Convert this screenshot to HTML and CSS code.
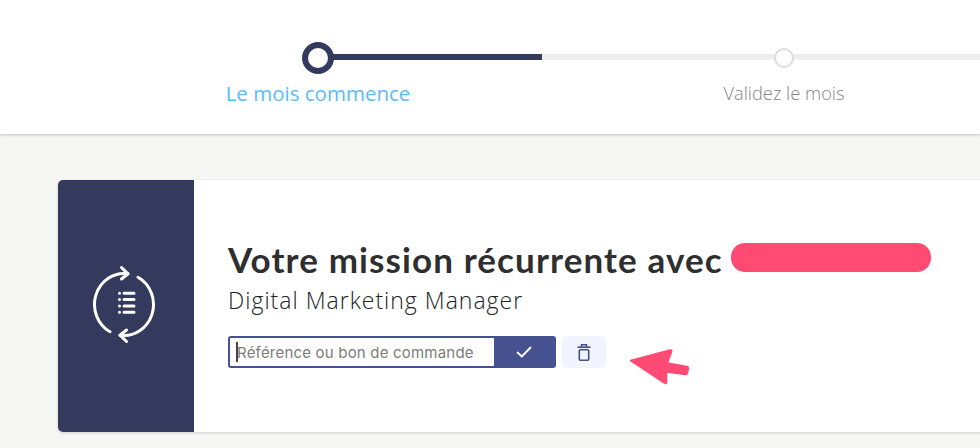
FILE: index.html
```html
<!DOCTYPE html>
<html lang="fr">
<head>
<meta charset="utf-8">
<title>Mission récurrente</title>
<link rel="stylesheet" href="styles.css">
</head>
<body>
<header class="header">
  <ol class="stepper">
    <li class="step step-active">
      <span class="dot"></span>
      <span class="label">Le mois commence</span>
    </li>
    <li class="step">
      <span class="dot"></span>
      <span class="label">Validez le mois</span>
    </li>
  </ol>
</header>
<main class="main">
  <section class="card">
    <aside class="side">
      <svg class="side-icon" width="64" height="84" viewBox="0 0 64 84" fill="none" stroke="#fff" stroke-width="3" stroke-linecap="round" stroke-linejoin="round">
        <path d="M36 10.800 A29.500 31 0 0 0 18 68.800"/>
        <path d="M29.500 4.500 L36 10.800 L29.500 16"/>
        <path d="M46 14.200 A29.500 31 0 0 1 28 72.200"/>
        <path d="M34.500 67 L28 72.200 L34.500 78.500"/>
        <path d="M27.500 30.300 V30.310 M27.500 36.500 V36.510 M27.500 43 V43.010 M27.500 49.300 V49.310"/>
        <path d="M32 30.300 H42 M32 36.500 H42 M32 43 H42 M32 49.300 H42"/>
      </svg>
    </aside>
    <div class="content">
      <div class="title-row">
        <h1 class="title">Votre mission récurrente avec</h1>
        <span class="redact"></span>
      </div>
      <p class="subtitle">Digital Marketing Manager</p>
      <div class="actions">
        <form class="ref-form">
          <div class="ref-field">
            <span class="caret"></span>
            <span class="placeholder">Référence ou bon de commande</span>
          </div>
          <button class="confirm" type="button" aria-label="Valider">
            <svg width="16" height="12" viewBox="0 0 16 12" fill="none" stroke="#fff" stroke-width="1.800" stroke-linecap="round" stroke-linejoin="round"><path d="M1.500 6.500 L5.800 10.500 L14.500 1.500"/></svg>
          </button>
        </form>
        <button class="trash" type="button" aria-label="Supprimer">
          <svg width="14" height="17" viewBox="0 0 14 17" fill="none" stroke="#465190" stroke-width="1.600"><path d="M0.500 3.200 H13.500"/><path d="M4.500 3.200 V0.800 H9.500 V3.200"/><rect x="2.300" y="5.800" width="9.400" height="10.400" rx="1"/></svg>
        </button>
        <svg class="arrow" width="62" height="36" viewBox="0 0 62 36"><path d="M1.500 11.500 L41 1 C42.500 0.600 43 1.500 42.600 2.500 L38.500 14 L58 17.500 C59 17.800 59.500 18.500 59.300 19.500 L58.300 24.500 C58 25.300 57.300 25.500 56.500 25.500 L37.500 23 L37.500 33.500 C37.500 34.800 36.500 34.800 35.500 34 Z" fill="#ff4a74" stroke="#ff4a74" stroke-width="1.500" stroke-linejoin="round"/></svg>
      </div>
    </div>
  </section>
</main>
</body>
</html>
```

FILE: styles.css
```css
* { box-sizing: border-box; }
html, body { margin: 0; height: 448px; overflow: hidden; }
body { background: #f6f6f4; font-family: "Open Sans", sans-serif; }

.header {
  height: 134px;
  background: #fff;
  box-shadow: 0 1px 3px rgba(0, 0, 0, .22);
  overflow: hidden;
  position: relative;
}
.stepper {
  display: flex;
  margin: 0;
  padding: 42px 0 0 85px;
  list-style: none;
  width: 980px;
  overflow: hidden;
  height: 112px;
}
.step {
  flex: none;
  width: 466px;
  height: 70px;
  display: flex;
  flex-direction: column;
  align-items: center;
  position: relative;
}
.step::before {
  content: "";
  position: absolute;
  left: 233px;
  top: 12px;
  width: 466px;
  height: 6px;
  background: #eeeeee;
}
.step-active::after {
  content: "";
  position: absolute;
  left: 233px;
  top: 12px;
  width: 224px;
  height: 6px;
  background: #343a5e;
}
.dot {
  position: relative;
  z-index: 1;
  width: 20px;
  height: 20px;
  margin: 6px 0;
  border: 2px solid #dcdcdc;
  border-radius: 50%;
  background: #fff;
}
.step-active .dot {
  width: 32px;
  height: 32px;
  margin: 0;
  border: 6px solid #343a5e;
}
.label {
  margin-top: 5px;
  font-size: 18.300px;
  line-height: 28px;
  font-weight: 300;
  color: #858585;
  white-space: nowrap;
}
.step-active .label {
  font-size: 20.500px;
  font-weight: 400;
  color: #58bcff;
}

.main { padding: 46px 0 0 58px; height: 314px; overflow: hidden; }
.card {
  display: flex;
  width: 930px;
  height: 252px;
  background: #fff;
  border-radius: 5px 0 0 5px;
  box-shadow: 0 1px 3px rgba(0, 0, 0, .18);
  overflow: hidden;
}
.side {
  flex: none;
  width: 136px;
  background: #343a5e;
  display: flex;
  align-items: center;
  justify-content: center;
}
.side-icon { display: block; margin: 0 4px 2px 0; }
.content { padding: 57px 0 0 34px; }
.title-row { display: flex; align-items: center; height: 44px; }
.title {
  margin: 0;
  font-family: "Lato", sans-serif;
  font-size: 35px;
  line-height: 44px;
  font-weight: 700;
  letter-spacing: 1.100px;
  color: #2f2f2f;
  white-space: nowrap;
}
.redact {
  flex: none;
  width: 200px;
  height: 29px;
  margin: -4px 0 0 8px;
  border-radius: 14px;
  background: #ff4a74;
}
.subtitle {
  margin: 4px 0 0;
  font-size: 23px;
  line-height: 30px;
  font-weight: 300;
  letter-spacing: 1px;
  color: #222;
  white-space: nowrap;
}
.actions {
  display: flex;
  align-items: flex-start;
  margin-top: 21px;
  gap: 6px;
}
.ref-form {
  display: flex;
  width: 328px;
  height: 32px;
  margin: 0;
  border: 2px solid #465190;
  border-radius: 3px;
  background: #465190;
}
.ref-field {
  width: 264px;
  background: #fff;
  display: flex;
  align-items: center;
  padding-left: 6px;
  border-radius: 1px 0 0 1px;
}
.caret {
  flex: none;
  width: 2px;
  height: 20px;
  background: #444;
}
.placeholder {
  margin-left: -1px;
  font-family: "Inter", sans-serif;
  font-size: 15px;
  letter-spacing: .2px;
  color: #7c7c7c;
  white-space: nowrap;
}
.confirm {
  flex: 1;
  border: 0;
  padding: 0;
  background: transparent;
  display: flex;
  align-items: center;
  justify-content: center;
}
.trash {
  flex: none;
  width: 44px;
  height: 32px;
  border: 0;
  padding: 0;
  border-radius: 6px;
  background: #f2f5fe;
  display: flex;
  align-items: center;
  justify-content: center;
}
.arrow { flex: none; display: block; margin: 13px 0 0 17px; }
```
